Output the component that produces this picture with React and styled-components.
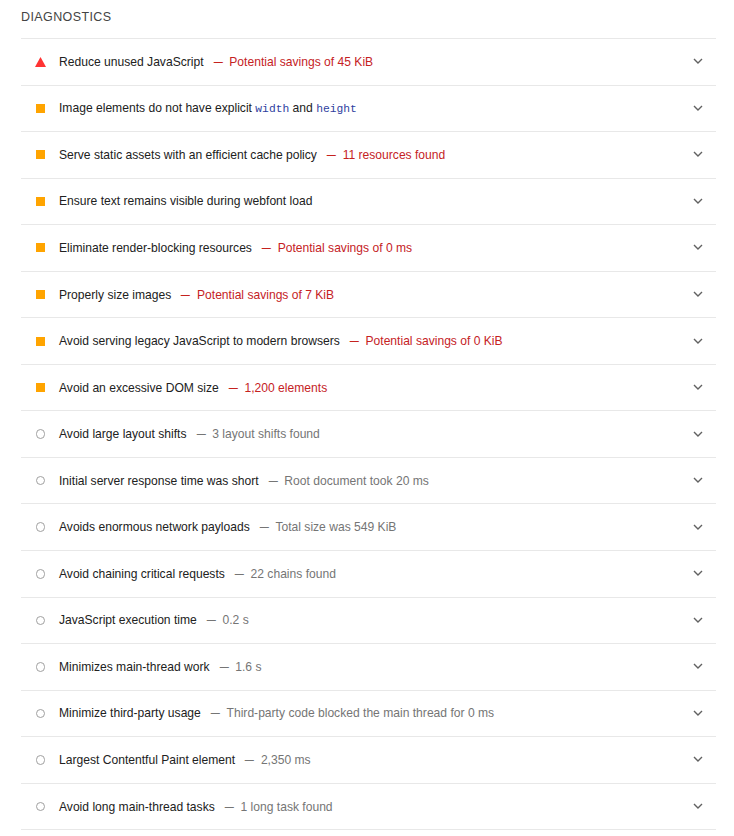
import React from 'react'
import styled, { createGlobalStyle } from 'styled-components'

const GlobalStyle = createGlobalStyle`
  body {
    margin: 0;
    background: #fff;
    font-family: "Liberation Sans", Arial, sans-serif;
  }
`

const audits = [
  { type: 'fail', title: 'Reduce unused JavaScript', detail: 'Potential savings of 45 KiB' },
  { type: 'warn', title: 'Image elements do not have explicit', code: true },
  { type: 'warn', title: 'Serve static assets with an efficient cache policy', detail: '11 resources found' },
  { type: 'warn', title: 'Ensure text remains visible during webfont load' },
  { type: 'warn', title: 'Eliminate render-blocking resources', detail: 'Potential savings of 0 ms' },
  { type: 'warn', title: 'Properly size images', detail: 'Potential savings of 7 KiB' },
  { type: 'warn', title: 'Avoid serving legacy JavaScript to modern browsers', detail: 'Potential savings of 0 KiB' },
  { type: 'warn', title: 'Avoid an excessive DOM size', detail: '1,200 elements' },
  { type: 'info', title: 'Avoid large layout shifts', detail: '3 layout shifts found' },
  { type: 'info', title: 'Initial server response time was short', detail: 'Root document took 20 ms' },
  { type: 'info', title: 'Avoids enormous network payloads', detail: 'Total size was 549 KiB' },
  { type: 'info', title: 'Avoid chaining critical requests', detail: '22 chains found' },
  { type: 'info', title: 'JavaScript execution time', detail: '0.2 s' },
  { type: 'info', title: 'Minimizes main-thread work', detail: '1.6 s' },
  { type: 'info', title: 'Minimize third-party usage', detail: 'Third-party code blocked the main thread for 0 ms' },
  { type: 'info', title: 'Largest Contentful Paint element', detail: '2,350 ms' },
  { type: 'info', title: 'Avoid long main-thread tasks', detail: '1 long task found' },
]

const Icon = ({ type }) => {
  if (type === 'fail') {
    return (
      <IconBox>
        <svg width="11" height="10" viewBox="0 0 11 10">
          <polygon points="5.5,0 11,10 0,10" fill="#f33" />
        </svg>
      </IconBox>
    )
  }
  if (type === 'warn') {
    return (
      <IconBox>
        <Square />
      </IconBox>
    )
  }
  return (
    <IconBox>
      <Circle />
    </IconBox>
  )
}

const Chevron = () => (
  <svg width="10" height="7" viewBox="0 0 10 7">
    <polyline points="1,1 5,5 9,1" fill="none" stroke="#616161" strokeWidth="1.4" />
  </svg>
)

const App = () => {
  return (
    <Page>
      <GlobalStyle />
      <Title>Diagnostics</Title>
      <List>
        {audits.map((a, i) => (
          <Row key={i}>
            <Icon type={a.type} />
            <Label>
              {a.title}
              {a.code && (
                <>
                  {' '}<Code>width</Code> and <Code>height</Code>
                </>
              )}
              {a.detail && (
                <Detail $type={a.type}>
                  <Dash>{'\u2013'}</Dash>{a.detail}
                </Detail>
              )}
            </Label>
            <Chevron />
          </Row>
        ))}
      </List>
    </Page>
  )
}

export default App

const Page = styled.div`
  padding: 0 18px 0 21px;
  width: 695px;
`

const Title = styled.div`
  height: 38px;
  box-sizing: border-box;
  padding-top: 11px;
  font-size: 12.5px;
  letter-spacing: 0.4px;
  text-transform: uppercase;
  color: #444;
  line-height: 13px;
`

const List = styled.div`
  border-bottom: 1px solid #e8e8e8;
`

const Row = styled.div`
  box-sizing: border-box;
  height: 46.55px;
  border-top: 1px solid #e8e8e8;
  display: flex;
  align-items: center;
  padding: 0 13px 0 14px;
`

const IconBox = styled.div`
  width: 11px;
  height: 11px;
  display: flex;
  align-items: center;
  justify-content: center;
  margin-right: 13px;
  flex-shrink: 0;
`

const Square = styled.div`
  width: 9px;
  height: 9px;
  background: #ffa400;
`

const Circle = styled.div`
  width: 7.5px;
  height: 7.5px;
  border: 1.5px solid #a0a0a0;
  border-radius: 50%;
`

const Label = styled.div`
  flex: 1;
  font-size: 12.1px;
  color: #212121;
  white-space: nowrap;
`

const Detail = styled.span`
  margin-left: 10px;
  color: ${p => (p.$type === 'info' ? '#757575' : '#c5221f')};
`

const Dash = styled.span`
  display: inline-block;
  margin: 0 8px 0 1px;
  transform: scaleX(1.35);
`

const Code = styled.code`
  font-family: "Liberation Mono", "DejaVu Sans Mono", monospace;
  font-size: 11.3px;
  color: #303f9f;
`
